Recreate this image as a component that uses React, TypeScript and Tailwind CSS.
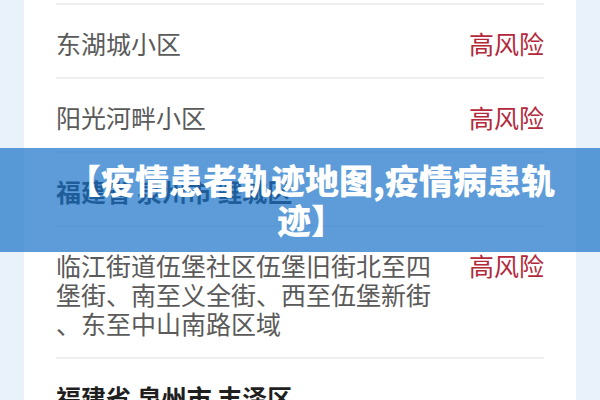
import React from "react";

const Divider = () => <div className="h-[2px] bg-[#efefef]" />;

const Risk = () => (
  <span className="text-[#b3283b] text-[25px] leading-[29px] shrink-0">高风险</span>
);

const Place = ({ lines }: { lines: string[] }) => (
  <div className="flex items-start justify-between pt-[24px] pb-[19px]">
    <div className="w-[380px] text-[#5a5a5a] text-[25px] leading-[29px]">
      {lines.map((l) => (
        <div key={l} className="whitespace-nowrap">
          {l}
        </div>
      ))}
    </div>
    <Risk />
  </div>
);

const Region = ({ title }: { title: string }) => (
  <div className="pt-[24px] pb-[19px] text-[#1f1f1f] text-[25px] leading-[29px] font-bold whitespace-pre">
    {title}
  </div>
);

export default function App() {
  return (
    <div
      className="relative w-[600px] h-[400px] overflow-hidden bg-[#e9f2fb]"
      style={{ fontFamily: '"Noto Sans CJK SC", "Noto Sans", sans-serif' }}
    >
      <div className="mx-[24px] bg-white px-[32px]">
        <div className="h-[3px]" />
        <Divider />
        <Place lines={["东湖城小区"]} />
        <Divider />
        <Place lines={["阳光河畔小区"]} />
        <Divider />
        <Region title="福建省 泉州市 鲤城区" />
        <Divider />
        <Place
          lines={[
            "临江街道伍堡社区伍堡旧街北至四",
            "堡街、南至义全街、西至伍堡新街",
            "、东至中山南路区域",
          ]}
        />
        <Divider />
        <Region title="福建省 泉州市 丰泽区" />
      </div>

      <div className="absolute left-0 right-0 top-[148px] h-[104px] bg-[rgba(30,118,201,0.72)] flex items-center justify-center pl-[61px] pr-[39px]">
        <p className="text-white font-black text-[34px] leading-[40px] text-center">
          【疫情患者轨迹地图,疫情病患轨迹】
        </p>
      </div>
    </div>
  );
}
